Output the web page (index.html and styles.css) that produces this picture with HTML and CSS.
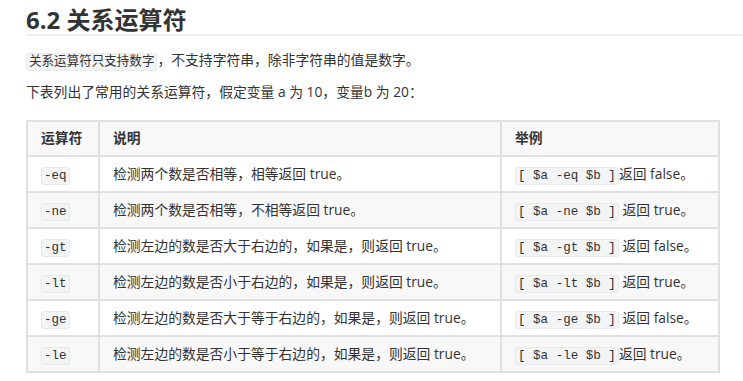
FILE: index.html
```html
<!DOCTYPE html>
<html lang="zh-CN">
<head>
<meta charset="utf-8">
<title>6.2 关系运算符</title>
<link rel="stylesheet" href="styles.css">
</head>
<body>
<div class="doc">
  <h2 class="title">6.2 关系运算符</h2>
  <p class="para"><code class="ic">关系运算符只支持数字</code>，不支持字符串，除非字符串的值是数字。</p>
  <p class="para">下表列出了常用的关系运算符，假定变量 a 为 10，变量b 为 20：</p>
  <table class="ops">
    <colgroup><col class="c1"><col class="c2"><col class="c3"></colgroup>
    <thead>
      <tr><th>运算符</th><th>说明</th><th>举例</th></tr>
    </thead>
    <tbody>
      <tr><td><code class="ic">-eq</code></td><td>检测两个数是否相等，相等返回 true。</td><td><code class="ic">[ $a -eq $b ]</code>返回 false。</td></tr>
      <tr><td><code class="ic">-ne</code></td><td>检测两个数是否相等，不相等返回 true。</td><td><code class="ic">[ $a -ne $b ]</code> 返回 true。</td></tr>
      <tr><td><code class="ic">-gt</code></td><td>检测左边的数是否大于右边的，如果是，则返回 true。</td><td><code class="ic">[ $a -gt $b ]</code> 返回 false。</td></tr>
      <tr><td><code class="ic">-lt</code></td><td>检测左边的数是否小于右边的，如果是，则返回 true。</td><td><code class="ic">[ $a -lt $b ]</code> 返回 true。</td></tr>
      <tr><td><code class="ic">-ge</code></td><td>检测左边的数是否大于等于右边的，如果是，则返回 true。</td><td><code class="ic">[ $a -ge $b ]</code> 返回 false。</td></tr>
      <tr><td><code class="ic">-le</code></td><td>检测左边的数是否小于等于右边的，如果是，则返回 true。</td><td><code class="ic">[ $a -le $b ]</code>返回 true。</td></tr>
    </tbody>
  </table>
</div>
</body>
</html>
```
FILE: styles.css
```css
html, body {
  margin: 0;
  padding: 0;
  background: #fff;
}
.doc {
  padding: 5px 0 0 26px;
  color: #333;
  font-family: "Open Sans", "Noto Sans CJK SC", sans-serif;
  font-size: 13.8px;
  line-height: 22px;
}
.title {
  margin: 0;
  font-size: 24px;
  line-height: 1.225;
  font-weight: 700;
  color: #333;
  border-bottom: 2px solid #eee;
  padding-bottom: 0;
}
.para {
  margin: 13px 0 10px;
}
.para + .para {
  margin-top: 0;
  margin-bottom: 17px;
}
.ic {
  font-family: "Liberation Mono", "Noto Sans CJK SC", monospace;
  font-size: 0.91em;
  line-height: 1.2;
  background: #f3f4f4;
  border: 1px solid #e7eaed;
  border-radius: 3px;
  padding: 1px 2px;
}
.ops {
  border-collapse: collapse;
  table-layout: fixed;
  width: 692px;
}
.c1 { width: 72px; }
.c2 { width: 402px; }
.c3 { width: 218px; }
.ops th, .ops td {
  border: 2px solid #dfe2e5;
  padding: 6px 13px;
  height: 22px;
  text-align: left;
  white-space: nowrap;
}
.ops th {
  font-weight: 700;
  padding: 5px 13px 6px;
}
.ops thead tr {
  background: #f8f8f8;
}
.ops tbody tr:nth-child(2n) {
  background: #f8f8f8;
}
```
